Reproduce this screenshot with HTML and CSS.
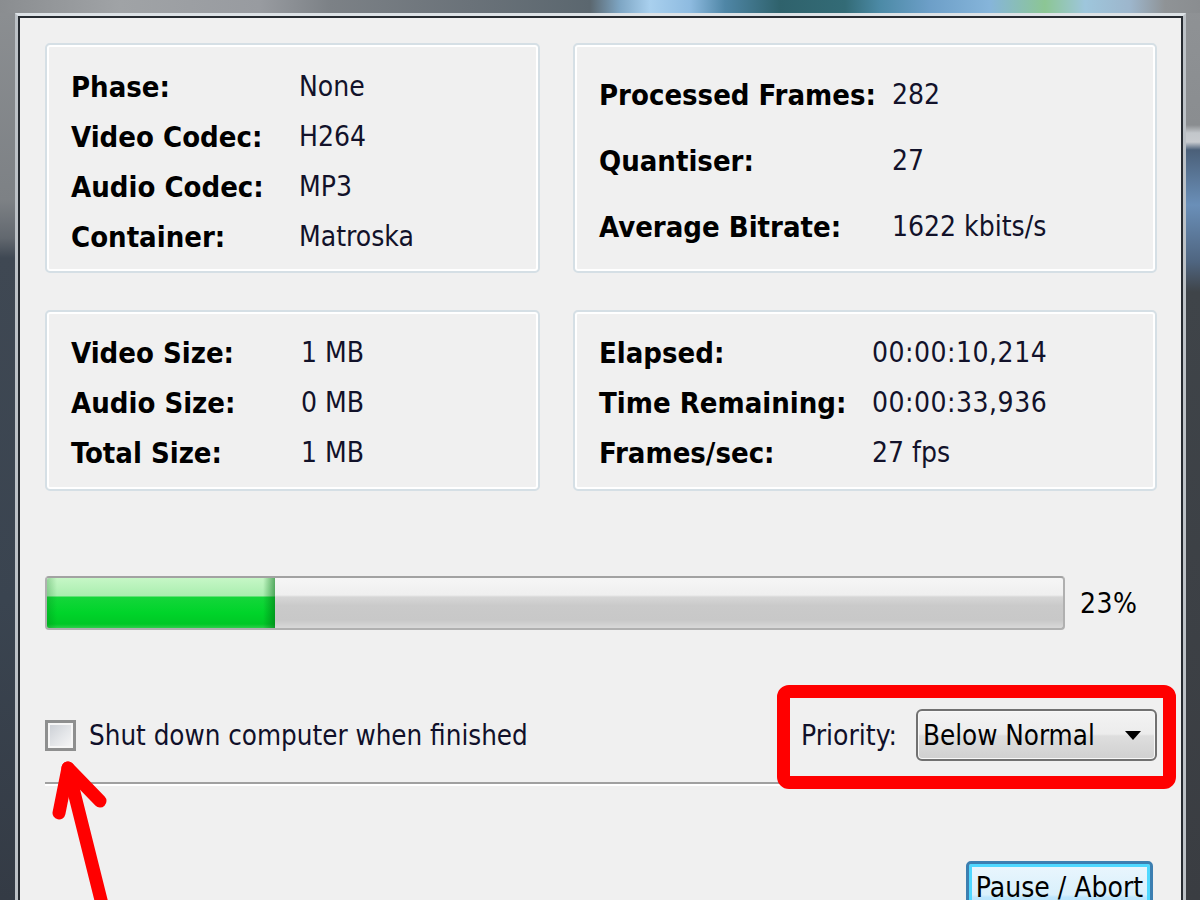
FILE: index.html
```html
<!DOCTYPE html>
<html lang="en">
<head>
<meta charset="utf-8">
<title>Encoding progress</title>
<link rel="stylesheet" href="styles.css">
</head>
<body>
<div class="desktop">
  <div class="window">
    <div class="client">
      <div class="groups">
        <section class="group group-a">
          <div class="kv kv-a rows-50">
            <span class="k">Phase:</span><span class="v">None</span>
            <span class="k">Video Codec:</span><span class="v">H264</span>
            <span class="k">Audio Codec:</span><span class="v">MP3</span>
            <span class="k">Container:</span><span class="v">Matroska</span>
          </div>
        </section>
        <section class="group group-b">
          <div class="kv kv-b rows-66">
            <span class="k">Processed Frames:</span><span class="v">282</span>
            <span class="k">Quantiser:</span><span class="v">27</span>
            <span class="k">Average Bitrate:</span><span class="v">1622 kbits/s</span>
          </div>
        </section>
        <section class="group group-c">
          <div class="kv kv-c rows-50">
            <span class="k">Video Size:</span><span class="v">1 MB</span>
            <span class="k">Audio Size:</span><span class="v">0 MB</span>
            <span class="k">Total Size:</span><span class="v">1 MB</span>
          </div>
        </section>
        <section class="group group-d">
          <div class="kv kv-d rows-50">
            <span class="k">Elapsed:</span><span class="v v-num">00:00:10,214</span>
            <span class="k">Time Remaining:</span><span class="v v-num">00:00:33,936</span>
            <span class="k">Frames/sec:</span><span class="v">27 fps</span>
          </div>
        </section>
      </div>

      <div class="progress-row">
        <div class="progress"><div class="progress-fill" style="width:22.4%"></div></div>
        <span class="progress-label">23%</span>
      </div>

      <div class="controls">
        <label class="check">
          <span class="check-box"></span>
          <span class="check-text">Shut down computer when finished</span>
        </label>
        <div class="priority">
          <span class="priority-label">Priority:</span>
          <div class="select">
            <span class="select-text">Below Normal</span>
            <svg class="select-arrow" width="16" height="9" viewBox="0 0 16 9"><path d="M0 0 H16 L8 9 Z" fill="#000"/></svg>
          </div>
        </div>
      </div>

      <div class="separator"></div>

      <div class="actions">
        <button class="btn" type="button">Pause / Abort</button>
      </div>
    </div>
  </div>

  <div class="annot-box"></div>
  <svg class="annot-arrow" width="1200" height="900" viewBox="0 0 1200 900">
    <g fill="none" stroke="#ff0000" stroke-width="13" stroke-linecap="round" stroke-linejoin="round">
      <path d="M68 768 L104 912"/>
      <path d="M59 813 L68 768 L100 801"/>
    </g>
  </svg>
</div>
</body>
</html>
```
FILE: styles.css
```css
html, body {
  margin: 0;
  padding: 0;
}

body {
  width: 1200px;
  height: 900px;
  overflow: hidden;
  font-family: "DejaVu Sans Condensed", "DejaVu Sans", sans-serif;
  font-stretch: condensed;
  font-size: 28px;
  color: #101018;
}

.desktop {
  position: relative;
  width: 1200px;
  height: 900px;
  box-sizing: border-box;
  padding: 13px 14px 0 15px;
  overflow: hidden;
  background:
    linear-gradient(to right, #8a8d90 0px, #a0a3a6 120px, #989ba0 260px, #7c8186 330px, #6a7279 470px, #5b676f 590px, #7ea6c4 620px, #a9d0ee 650px, #8ebbe0 690px, #4f86a6 725px, #2f626c 780px, #336b76 845px, #4c8aa6 880px, #6d9fc8 930px, #86b5da 990px, #8cc694 1045px, #9ec6dc 1085px, #9db6cc 1130px, #8f9396 1165px, #8a8d90 1200px) 0 0 / 100% 13px no-repeat,
    linear-gradient(to bottom, #8c8f92 0px, #7d8185 200px, #62686f 238px, #3f4853 258px, #3a4450 600px, #343b45 900px) 0 0 / 15px 100% no-repeat,
    linear-gradient(to bottom, #8f9295 0px, #8a8d90 125px, #c3c7cb 133px, #c8cbcf 142px, #4b6079 150px, #6a8fb8 205px, #4f6580 262px, #3f4449 292px, #3a3d42 900px) 100% 0 / 14px 100% no-repeat,
    #3a3d42;
}

.window {
  height: 100%;
  box-sizing: border-box;
  border: 3px solid #bcc1c6;
  border-top-color: #dde2e6;
  border-bottom: 0;
}

.client {
  height: 100%;
  box-sizing: border-box;
  border: 2px solid #262b31;
  border-bottom: 0;
  background: #f0f0f0;
  padding: 25px 24px 0 25px;
}

/* group boxes */
.groups {
  display: grid;
  grid-template-columns: 495px 584px;
  grid-template-rows: 230px 181px;
  column-gap: 33px;
  row-gap: 37px;
}

.group {
  box-sizing: border-box;
  border: 2px solid #d5dfe5;
  border-radius: 5px;
  box-shadow: inset 0 0 0 2px #ffffff;
  padding: 17px 24px 0 24px;
}

.group-b {
  padding-top: 17px;
}

.group-c, .group-d {
  padding-top: 16px;
}

.kv {
  display: grid;
  white-space: nowrap;
}

.rows-50 { grid-auto-rows: 50px; line-height: 50px; }
.rows-66 { grid-auto-rows: 66px; line-height: 66px; }

.kv-a { grid-template-columns: 228px auto; }
.kv-b { grid-template-columns: 293px auto; }
.kv-c { grid-template-columns: 230px auto; }
.kv-d { grid-template-columns: 273px auto; }

.k {
  font-weight: bold;
  font-size: 29px;
  color: #000000;
}

.v {
  color: #12122a;
}

.v-num {
  letter-spacing: 0.5px;
}

/* progress */
.progress-row {
  display: flex;
  align-items: center;
  gap: 15px;
  margin-top: 85px;
}

.progress {
  width: 1020px;
  height: 54px;
  box-sizing: border-box;
  border: 2px solid #b0b0b0;
  border-top-color: #a2a2a2;
  border-radius: 4px;
  background: linear-gradient(to bottom, #f6f6f6 0%, #efefef 34%, #d6d6d6 38%, #cacaca 55%, #c8c8c8 84%, #d8d8d8 100%);
  overflow: hidden;
  display: flex;
}

.progress-fill {
  height: 100%;
  background:
    linear-gradient(to left, rgba(0, 110, 20, 0.55) 0px, rgba(0, 110, 20, 0) 12px),
    linear-gradient(to right, rgba(0, 110, 20, 0.25) 0px, rgba(0, 110, 20, 0) 10px),
    linear-gradient(to bottom, #c6f7c6 0%, #a9eeaf 36%, #14d63a 38%, #00d42a 70%, #00c826 92%, #2ccf48 100%);
}

.progress-label {
  color: #000;
  letter-spacing: 0.5px;
}

/* bottom controls */
.controls {
  display: flex;
  justify-content: space-between;
  align-items: center;
  height: 52px;
  margin-top: 79px;
}

.check {
  display: flex;
  align-items: center;
  gap: 13px;
}

.check-box {
  width: 31px;
  height: 31px;
  box-sizing: border-box;
  border: 3px solid #8e8f8f;
  box-shadow: inset 0 0 0 2px #f6f6f6;
  background: linear-gradient(135deg, #c9cdd3 0%, #e4e6e9 55%, #f8f8f8 100%);
}

.check-text {
  color: #10102a;
  font-size: 27.5px;
}

.priority {
  display: flex;
  align-items: center;
  gap: 19px;
}

.priority-label {
  color: #10102a;
}

.select {
  width: 241px;
  height: 52px;
  box-sizing: border-box;
  border: 2px solid #717171;
  border-radius: 6px;
  background: linear-gradient(to bottom, #f3f3f3 0%, #ececec 48%, #dedede 52%, #d0d0d0 100%);
  box-shadow: inset 0 0 0 1px #f8f8f8;
  display: flex;
  align-items: center;
  justify-content: space-between;
  padding: 0 14px 0 5px;
}

.select-text {
  color: #000;
  font-size: 27.5px;
}

.select-arrow {
  display: block;
}

.separator {
  margin-top: 21px;
  height: 2px;
  background: #a0a0a0;
  border-bottom: 2px solid #ffffff;
}

.actions {
  display: flex;
  justify-content: flex-end;
  margin-top: 75px;
  padding-right: 4px;
}

.btn {
  font: inherit;
  color: #000;
  width: 187px;
  height: 70px;
  box-sizing: border-box;
  border: 3px solid #3c7fb1;
  border-radius: 5px;
  box-shadow: inset 0 0 0 3px #4fd8ff;
  background: linear-gradient(to bottom, #eaf6fd 0%, #d9f0fc 48%, #bee6fd 52%, #a7d9f5 100%);
  line-height: 28px;
  text-align: center;
  white-space: nowrap;
  display: flex;
  align-items: flex-start;
  justify-content: center;
  padding: 10px 0 0 0;
}

/* annotations drawn over the screenshot */
.annot-box {
  position: absolute;
  left: 777px;
  top: 685px;
  width: 399px;
  height: 104px;
  box-sizing: border-box;
  border: 13px solid #ff0000;
  border-radius: 12px;
  pointer-events: none;
}

.annot-arrow {
  position: absolute;
  left: 0;
  top: 0;
  pointer-events: none;
}
```
